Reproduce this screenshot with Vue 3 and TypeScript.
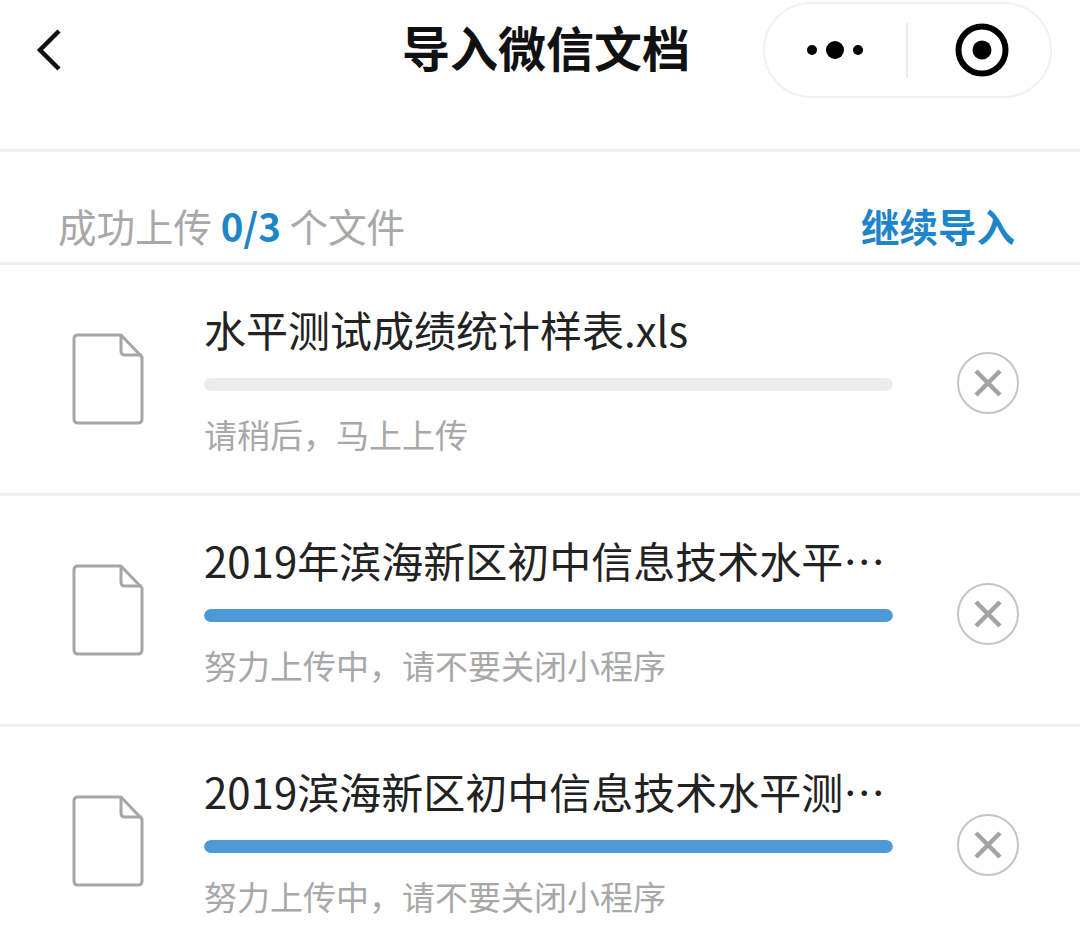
<script setup lang="ts">
interface UploadFile {
  id: number
  name: string
  percent: number
  hint: string
}

const files: UploadFile[] = [
  { id: 1, name: '水平测试成绩统计样表.xls', percent: 0, hint: '请稍后，马上上传' },
  { id: 2, name: '2019年滨海新区初中信息技术水平测试成绩统计表.xls', percent: 100, hint: '努力上传中，请不要关闭小程序' },
  { id: 3, name: '2019滨海新区初中信息技术水平测试成绩统计样表.xls', percent: 100, hint: '努力上传中，请不要关闭小程序' }
]
</script>

<template>
  <div class="page">
    <header class="nav">
      <svg class="back" width="28" height="44" viewBox="0 0 28 44">
        <path d="M24 3 L5 22 L24 41" fill="none" stroke="#111" stroke-width="4.5" />
      </svg>
      <h1 class="title">导入微信文档</h1>
      <div class="capsule">
        <svg class="more" width="60" height="24" viewBox="0 0 60 24">
          <circle cx="7" cy="12" r="5" fill="#000" />
          <circle cx="30" cy="12" r="9" fill="#000" />
          <circle cx="53" cy="12" r="5" fill="#000" />
        </svg>
        <span class="sep"></span>
        <svg class="target" width="54" height="54" viewBox="0 0 54 54">
          <circle cx="27" cy="27" r="23.5" fill="none" stroke="#000" stroke-width="6" />
          <circle cx="27" cy="27" r="9.5" fill="#000" />
        </svg>
      </div>
    </header>

    <section class="summary">
      <p class="count">成功上传 <b>0/3</b> 个文件</p>
      <span class="more-link">继续导入</span>
    </section>

    <ul class="list">
      <li v-for="file in files" :key="file.id" class="row">
        <svg class="doc" width="72" height="92" viewBox="0 0 72 92">
          <path
            d="M6 2 H49 L70 24 V86 Q70 90 66 90 H6 Q2 90 2 86 V6 Q2 2 6 2 Z"
            fill="#fff"
            stroke="#a6a6a6"
            stroke-width="3"
            stroke-linejoin="round"
          />
          <path
            d="M49 2 V18 Q49 22 53 22 H70"
            fill="none"
            stroke="#a6a6a6"
            stroke-width="3"
          />
        </svg>
        <div class="info">
          <div class="name">{{ file.name }}</div>
          <div class="track">
            <div class="fill" :style="{ width: file.percent + '%' }"></div>
          </div>
          <div class="hint">{{ file.hint }}</div>
        </div>
        <button class="remove" type="button">
          <svg width="28" height="28" viewBox="0 0 28 28">
            <path d="M2 2 L26 26 M26 2 L2 26" stroke="#a3a3a3" stroke-width="4.5" />
          </svg>
        </button>
      </li>
    </ul>
  </div>
</template>

<style scoped>
.page {
  width: 1080px;
  height: 943px;
  overflow: hidden;
  background: #fff;
  font-family: "Noto Sans CJK SC", "Noto Sans", sans-serif;
}

.nav {
  position: relative;
  height: 149px;
  border-bottom: 3px solid #efefef;
}

.back {
  position: absolute;
  left: 35px;
  top: 28px;
}

.title {
  margin: 0;
  padding-top: 10px;
  padding-left: 12px;
  text-align: center;
  font-size: 48px;
  line-height: 72px;
  font-weight: 700;
  color: #111;
}

.capsule {
  position: absolute;
  left: 763px;
  top: 2px;
  width: 289px;
  height: 96px;
  box-sizing: border-box;
  display: flex;
  align-items: center;
  border: 2px solid #f1f1f1;
  border-radius: 48px;
}

.more {
  margin-left: 40px;
}

.sep {
  width: 2px;
  height: 55px;
  margin-left: 41px;
  background: #ececec;
}

.target {
  margin-left: 47px;
}

.summary {
  height: 113px;
  box-sizing: border-box;
  padding: 35px 65px 0 58px;
  display: flex;
  justify-content: space-between;
  align-items: center;
  border-bottom: 3px solid #efefef;
}

.count {
  margin: 0;
  font-size: 38.5px;
  line-height: 56px;
  color: #a8a8a8;
}

.count b {
  color: #1f85c9;
  font-weight: 700;
}

.more-link {
  font-size: 38.5px;
  line-height: 56px;
  font-weight: 700;
  color: #1f85c9;
}

.list {
  margin: 0;
  padding: 0;
  list-style: none;
}

.row {
  height: 228px;
  display: flex;
  align-items: center;
  border-bottom: 3px solid #efefef;
}

.doc {
  flex: none;
  margin-left: 72px;
}

.info {
  width: 689px;
  margin-left: 60px;
  padding-bottom: 2px;
}

.name {
  font-size: 42px;
  line-height: 60px;
  color: #222;
  white-space: nowrap;
  overflow: hidden;
  text-overflow: ellipsis;
}

.track {
  height: 13px;
  margin-top: 19px;
  border-radius: 7px;
  background: #ececec;
  overflow: hidden;
}

.fill {
  height: 100%;
  border-radius: 7px;
  background: #4d9ad6;
}

.hint {
  margin-top: 19px;
  font-size: 33px;
  line-height: 48px;
  color: #a8a8a8;
}

.remove {
  flex: none;
  width: 62px;
  height: 62px;
  margin-left: 64px;
  margin-top: 8px;
  padding: 0;
  display: flex;
  align-items: center;
  justify-content: center;
  background: #fff;
  border: 2px solid #c4c4c4;
  border-radius: 50%;
}
</style>

<style>
html,
body {
  margin: 0;
  background: #fff;
}
</style>
